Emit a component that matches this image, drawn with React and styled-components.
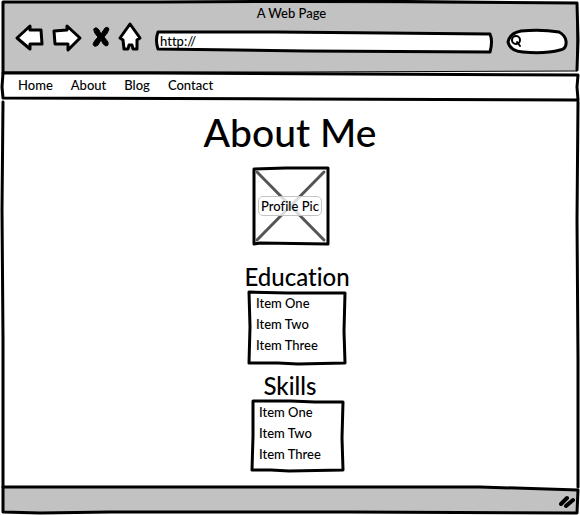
import React from "react";
import styled, { createGlobalStyle } from "styled-components";

const ink = "#000";
const chrome = "#c2c2c2";

const GlobalStyle = createGlobalStyle`
  *, *::before, *::after { box-sizing: border-box; }
  body { margin: 0; background: #fff; overflow-x: hidden; }
  body, button, input {
    font-family: Lato, "Open Sans", sans-serif;
    font-size: 13px;
    font-weight: 500;
    line-height: 21px;
    font-variant-ligatures: none;
    color: ${ink};
  }
`;

const Outline = styled.svg`
  position: absolute;
  inset: 0;
  width: 100%;
  height: 100%;
  overflow: visible;
  pointer-events: none;

  path {
    fill: ${(p) => p.$fill || "none"};
    stroke: ${ink};
    stroke-width: ${(p) => p.$weight || 3};
    stroke-linejoin: round;
    stroke-linecap: round;
    vector-effect: non-scaling-stroke;
  }
`;

function Sketch({ w, h, d, fill, weight }) {
  return (
    <Outline
      viewBox={`0 0 ${w} ${h}`}
      preserveAspectRatio="none"
      aria-hidden="true"
      $fill={fill}
      $weight={weight}
    >
      <path d={d} />
    </Outline>
  );
}

const BrowserWindow = styled.div`
  display: flex;
  flex-direction: column;
  min-height: 100vh;
`;

const Header = styled.header`
  position: relative;
  padding: 3px 13px 21px 16px;
`;

const WindowTitle = styled.div`
  position: relative;
  text-align: center;
`;

const Toolbar = styled.div`
  position: relative;
  display: flex;
  align-items: center;
  height: 28px;
  gap: 15px;
`;

const ToolButtons = styled.div`
  display: flex;
  align-items: center;
  gap: 8px;
`;

const ToolButton = styled.button`
  display: flex;
  padding: 0;
  border: 0;
  background: none;
  cursor: pointer;
`;

const ToolIcon = styled.svg`
  display: block;
  flex: none;
  position: relative;
  overflow: visible;
  fill: #fff;
  stroke: ${ink};
  stroke-width: ${(p) => p.$weight || 3};
  stroke-linejoin: round;
  stroke-linecap: round;
`;

const AddressField = styled.label`
  position: relative;
  flex: 1;
  height: 20px;
  margin-top: 6px;
`;

const SearchField = styled.label`
  position: relative;
  display: flex;
  align-items: center;
  width: 60px;
  height: 24px;
  margin-top: 6px;
  padding: 0 4px;
`;

const TextInput = styled.input`
  position: relative;
  display: block;
  width: 100%;
  min-width: 0;
  height: 20px;
  padding: 0 4px;
  border: 0;
  outline: 0;
  background: transparent;
`;

const Nav = styled.nav`
  position: relative;
  display: flex;
  gap: 18px;
  height: 27px;
  padding: 2px 18px;
`;

const NavLink = styled.a`
  position: relative;
  color: ${ink};
  text-decoration: none;
`;

const Page = styled.main`
  position: relative;
  flex: 1;
  display: flex;
  flex-direction: column;
  align-items: center;
  padding: 8px 16px 0;
`;

const PageTitle = styled.h1`
  margin: 0;
  font-size: 39px;
  line-height: 48px;
  font-weight: 500;
`;

const ProfilePicture = styled.div`
  position: relative;
  display: flex;
  align-items: center;
  justify-content: center;
  width: 76px;
  height: 77px;
  margin: 11px 0 19px;
`;

const Cross = styled.svg`
  position: absolute;
  inset: 0;
  width: 100%;
  height: 100%;
  stroke: #555;
  stroke-width: 3;
  stroke-linecap: round;
`;

const PictureLabel = styled.span`
  position: relative;
  padding: 0 2px;
  border: 1px solid #c4c4c4;
  border-radius: 5px;
  background: rgba(255, 255, 255, 0.8);
  line-height: 18px;
  white-space: nowrap;
`;

const Section = styled.section`
  display: flex;
  flex-direction: column;
  align-items: center;
  padding-left: 14px;
`;

const SectionTitle = styled.h2`
  margin: 0;
  padding-right: ${(p) => (p.$outdent ? "14px" : "0")};
  font-size: 24px;
  line-height: 28px;
  font-weight: 500;
`;

const ItemBox = styled.div`
  position: relative;
  width: ${(p) => p.$width};
  margin-bottom: 8px;
  padding: 2px 8px 8px;
`;

const Items = styled.ul`
  position: relative;
  margin: 0;
  padding: 0;
  list-style: none;
`;

const Footer = styled.footer`
  position: relative;
  display: flex;
  justify-content: flex-end;
  align-items: center;
  height: 28px;
  padding: 2px 5px 0;
`;

const Grip = styled.svg`
  position: relative;
  stroke: ${ink};
  stroke-width: 4;
  stroke-linecap: round;
`;

const links = ["Home", "About", "Blog", "Contact"];

const sections = [
  {
    title: "Education",
    width: "98px",
    outline: "M1 1 L40 2 L97 2 L96 40 L97 72 L50 73 L30 72 L1 72 L2 36 Z",
  },
  {
    title: "Skills",
    width: "92px",
    outdent: true,
    outline: "M2 1 L40 1 L64 2 L92 2 L91 38 L92 70 L38 71 L20 70 L1 70 L2 36 Z",
  },
];

const items = ["Item One", "Item Two", "Item Three"];

export default function App() {
  return (
    <>
      <GlobalStyle />
      <BrowserWindow>
        <Header>
          <Sketch
            w={580}
            h={73}
            fill={chrome}
            weight={1}
            d="M3 2 L577 3 L577 71 L300 72 L3 72 Z"
          />
          <Sketch w={580} h={73} d="M3 73 L3 2 L160 2 L350 1 L577 3 L578 40 L577 70" />
          <WindowTitle>A Web Page</WindowTitle>
          <Toolbar>
            <ToolButtons>
              <ToolButton aria-label="Back">
                <ToolIcon width="28" height="27" viewBox="0 0 28 27">
                  <path d="M1 13 L14 1 L14 5 L25 5 L26 19 L14 19 L14 24 Z" />
                </ToolIcon>
              </ToolButton>
              <ToolButton aria-label="Forward">
                <ToolIcon width="30" height="27" viewBox="0 0 30 27">
                  <path d="M2 6 L15 5 L15 1 L28 13 L16 25 L16 19 L3 19 Z" />
                </ToolIcon>
              </ToolButton>
              <ToolButton aria-label="Stop">
                <ToolIcon width="21" height="27" viewBox="0 0 21 27" $weight={1}>
                  <path
                    d="M4 4 Q6 1 9 5 L11 9 L15 3 Q18 1 19 4 Q18 8 14 12 L18 17 Q19 21 16 21 Q13 20 11 15 L8 20 Q4 23 3 19 Q4 16 8 12 Q3 7 4 4 Z"
                    fill={ink}
                  />
                </ToolIcon>
              </ToolButton>
              <ToolButton aria-label="Home">
                <ToolIcon width="22" height="28" viewBox="0 0 22 28">
                  <path d="M11 0 L21 14 L18 16 L18 25 L14 25 L13 21 L10 21 L9 25 L5 25 L4 16 L1 14 Z" />
                </ToolIcon>
              </ToolButton>
            </ToolButtons>
            <AddressField>
              <Sketch
                w={338}
                h={20}
                fill="#fff"
                d="M2 1 L120 1 L230 2 L336 3 Q339 10 336 21 L150 20 L2 18 Q-1 9 2 1 Z"
              />
              <TextInput aria-label="Address" defaultValue="http://" />
            </AddressField>
            <SearchField>
              <Sketch
                w={60}
                h={24}
                fill="#fff"
                d="M14 2 Q34 0 52 3 Q58 6 59 12 Q60 20 53 21 Q38 25 16 23 Q3 22 1 13 Q3 4 14 2 Z"
              />
              <ToolIcon width="11" height="12" viewBox="0 0 11 12" $weight={2}>
                <circle cx="5" cy="5" r="4" />
                <path d="M6 7 L9 11" />
              </ToolIcon>
              <TextInput type="search" aria-label="Search" />
            </SearchField>
          </Toolbar>
        </Header>

        <Nav>
          <Sketch
            w={580}
            h={27}
            fill="#fff"
            d="M3 0 L150 0 L578 2 L577 14 L578 27 L300 26 L3 25 L2 14 Z"
          />
          {links.map((link) => (
            <NavLink key={link} href="#">
              {link}
            </NavLink>
          ))}
        </Nav>

        <Page>
          <Sketch
            w={580}
            h={388}
            d="M3 2 L2 110 L3 240 L3 388 M578 2 L577 120 L578 260 L578 388"
          />
          <PageTitle>About Me</PageTitle>
          <ProfilePicture>
            <Sketch w={76} h={77} d="M2 2 L34 1 L76 1 L76 77 L8 76 L2 77 Z" />
            <Cross viewBox="0 0 76 77" aria-hidden="true">
              <path d="M5 5 L72 73 M72 5 L5 73" />
            </Cross>
            <PictureLabel>Profile Pic</PictureLabel>
          </ProfilePicture>
          {sections.map((section) => (
            <Section key={section.title}>
              <SectionTitle $outdent={section.outdent}>{section.title}</SectionTitle>
              <ItemBox $width={section.width}>
                <Sketch w={parseInt(section.width, 10)} h={73} d={section.outline} />
                <Items>
                  {items.map((item) => (
                    <li key={item}>{item}</li>
                  ))}
                </Items>
              </ItemBox>
            </Section>
          ))}
        </Page>

        <Footer>
          <Sketch
            w={580}
            h={28}
            fill={chrome}
            d="M3 0 L200 0 L480 0 L578 3 L577 26 L350 25 L200 25 L110 25 L40 26 L3 25 Z"
          />
          <Grip width="16" height="14" viewBox="0 0 16 14" aria-hidden="true">
            <path d="M2 9 L8 3 M7 11 L14 5" />
          </Grip>
        </Footer>
      </BrowserWindow>
    </>
  );
}
